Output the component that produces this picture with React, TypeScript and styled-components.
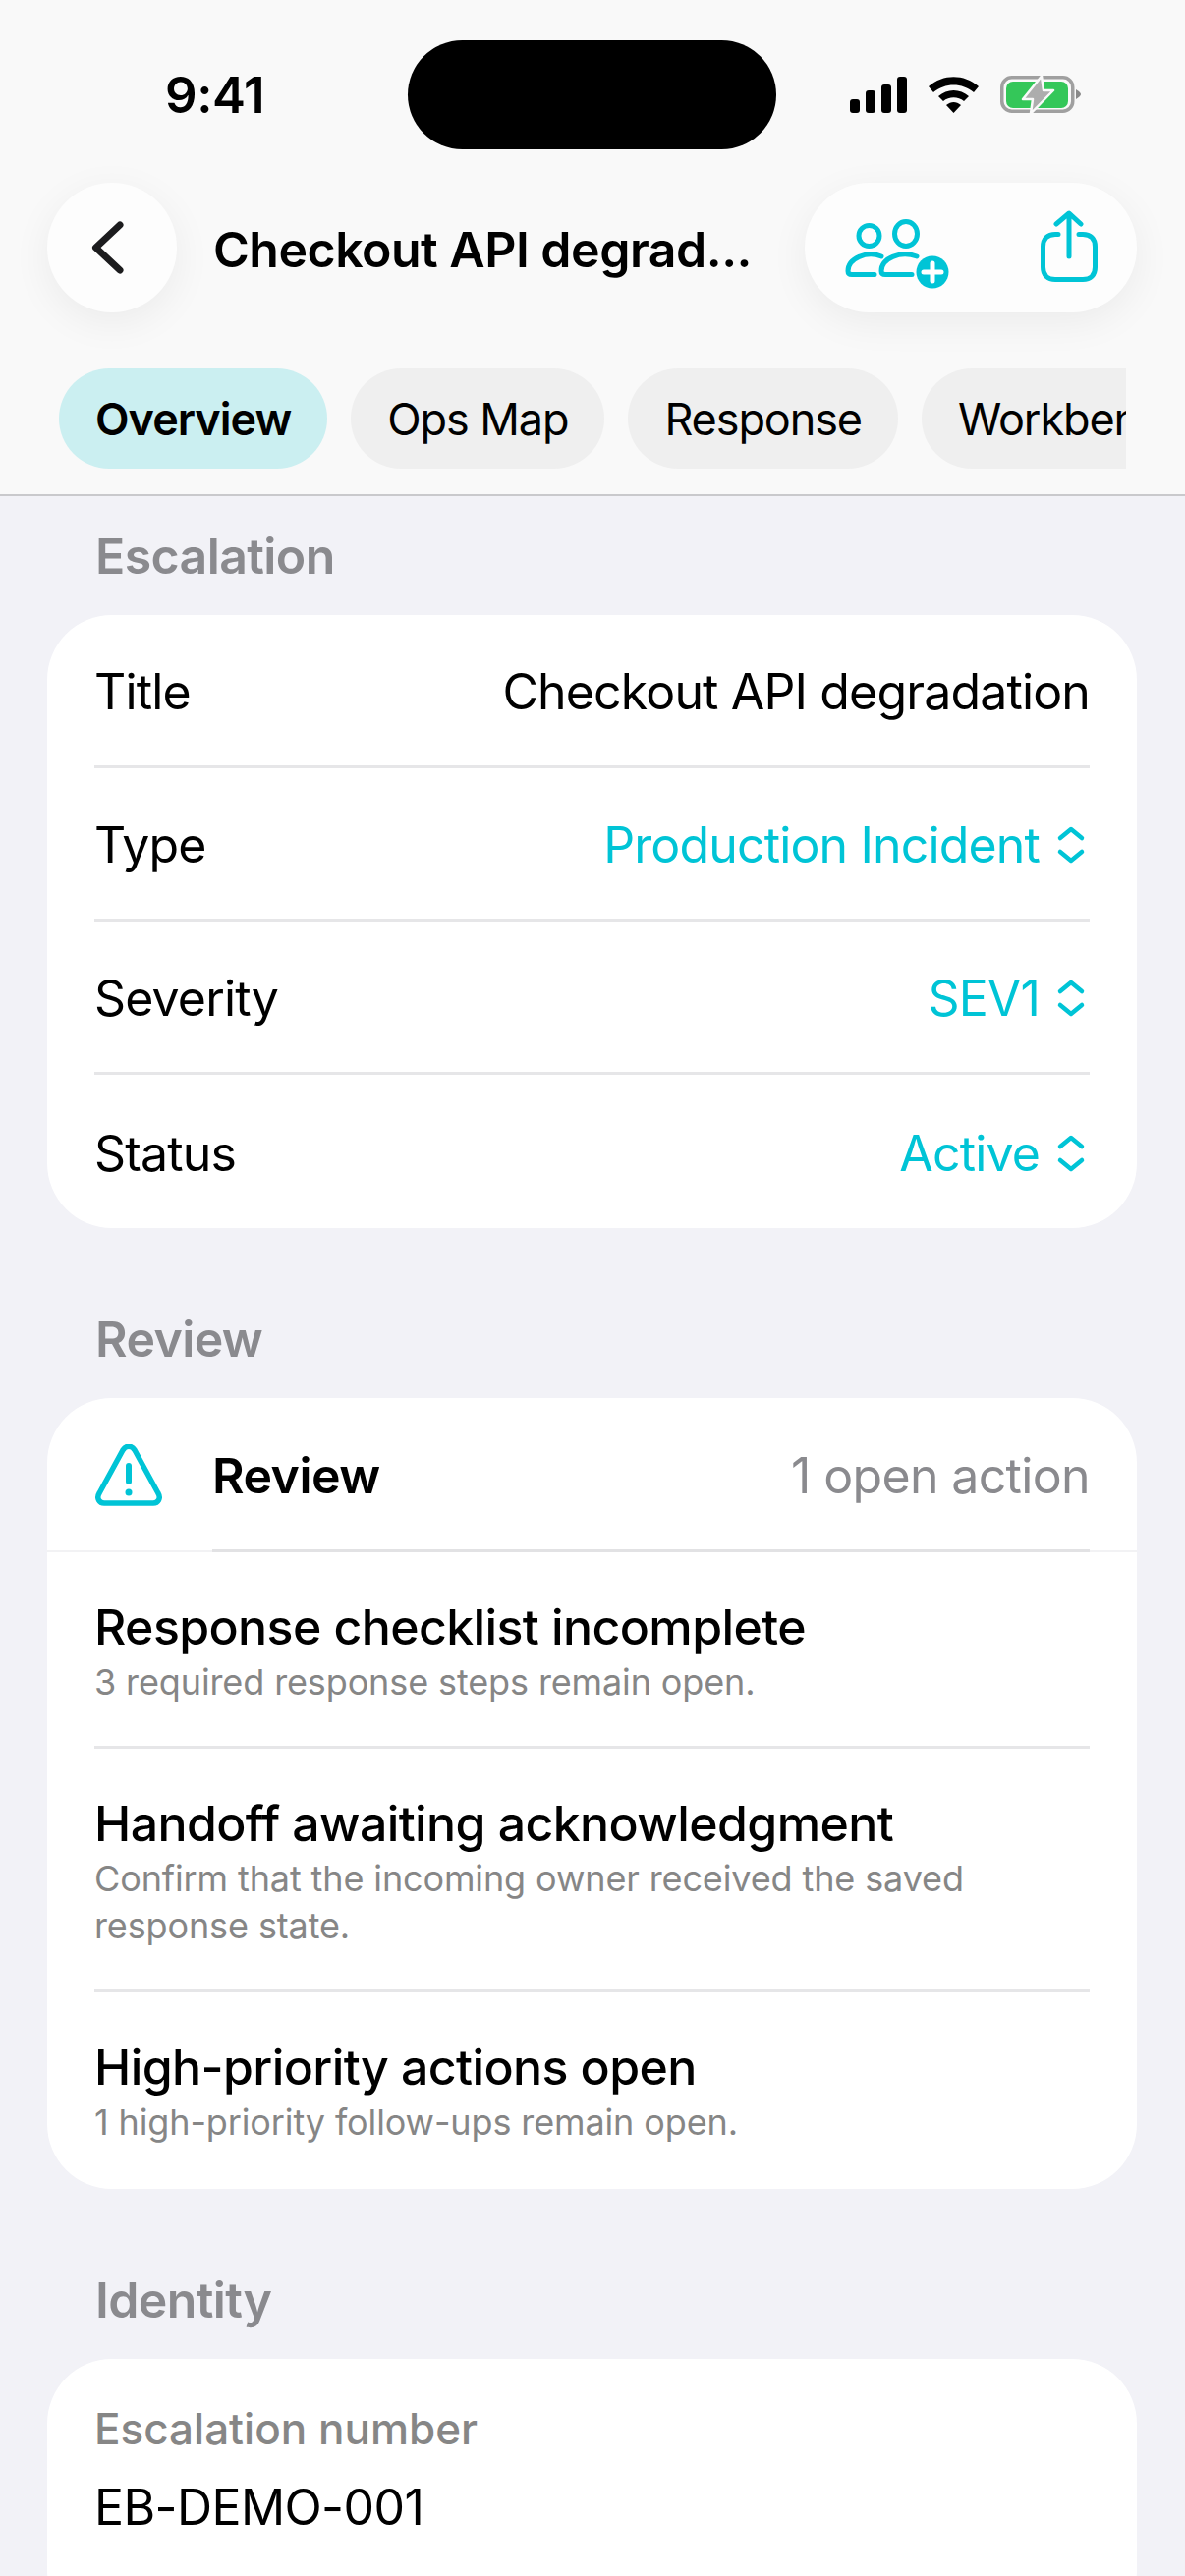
import styled, {createGlobalStyle} from 'styled-components';

const teal = '#00c4d6';

const GlobalStyle = createGlobalStyle`
    html, body {
        margin: 0;
        padding: 0;
        background: #f2f2f7;
    }

    body {
        font-family: Inter, "Liberation Sans", sans-serif;
        color: #000;
    }

    * {
        box-sizing: border-box;
    }
`;

const Page = styled.div`
    width: 1206px;
    height: 2622px;
    overflow: hidden;
    background: #f2f2f7;
`;

const Header = styled.header`
    height: 505px;
    background: #f9f9f9;
    border-bottom: 2px solid #c9c9cc;
`;

const StatusBar = styled.div`
    height: 186px;
    padding: 41px 0 0 168px;
    display: flex;
    align-items: flex-start;
`;

const Time = styled.div`
    width: 247px;
    height: 111px;
    display: flex;
    align-items: center;
    font-size: 51px;
    font-weight: 600;
    letter-spacing: -0.4px;
`;

const Island = styled.div`
    width: 375px;
    height: 111px;
    border-radius: 56px;
    background: #000;
`;

const StatusIcons = styled.div`
    height: 111px;
    display: flex;
    align-items: center;
    gap: 22px;
    margin-left: 75px;
`;

const NavRow = styled.div`
    display: flex;
    align-items: center;
    padding: 0 49px 0 48px;
    height: 132px;
`;

const BackButton = styled.div`
    width: 132px;
    height: 132px;
    border-radius: 50%;
    background: #fdfdfd;
    box-shadow: 0 10px 40px rgba(0, 0, 0, 0.06);
    display: flex;
    align-items: center;
    justify-content: center;
`;

const NavTitle = styled.div`
    flex: 1;
    margin-left: 37px;
    padding-top: 3px;
    font-size: 50px;
    font-weight: 600;
    letter-spacing: -0.5px;
    white-space: nowrap;
`;

const ActionPill = styled.div`
    width: 338px;
    height: 132px;
    border-radius: 66px;
    background: #fdfdfd;
    box-shadow: 0 10px 40px rgba(0, 0, 0, 0.06);
    display: flex;
    align-items: center;
    justify-content: space-between;
    padding: 0 40px 0 41px;
`;

const TabScroller = styled.div`
    display: flex;
    gap: 24px;
    width: 1086px;
    margin: 57px 0 0 60px;
    overflow: hidden;
`;

const Tab = styled.div<{$active?: boolean}>`
    flex: none;
    height: 102px;
    padding: 0 37px;
    border-radius: 51px;
    display: flex;
    align-items: center;
    font-size: 45px;
    letter-spacing: ${({$active}) => ($active ? '-1px' : '-1.1px')};
    font-weight: ${({$active}) => ($active ? 600 : 400)};
    background: ${({$active}) => ($active ? '#cbeff1' : '#efefef')};
`;

const Content = styled.main`
    padding: 0 49px 0 48px;
`;

const SectionLabel = styled.div`
    height: 173px;
    padding: 83px 49px 0;
    font-size: 50px;
    line-height: 60px;
    font-weight: 600;
    letter-spacing: -0.6px;
    color: #8a8a8e;
`;

const FirstLabel = styled(SectionLabel)`
    height: 121px;
    padding-top: 31px;
`;

const Card = styled.section`
    background: #fff;
    border-radius: 66px;
    overflow: hidden;
`;

const Row = styled.div`
    height: 156px;
    margin: 0 48px;
    padding-top: 3px;
    display: flex;
    align-items: center;
    justify-content: space-between;
    font-size: 50px;
    letter-spacing: -0.85px;
    border-bottom: 3px solid #e6e6e8;

    &:last-child {
        border-bottom: none;
    }
`;

const PickerValue = styled.div`
    display: flex;
    align-items: center;
    gap: 13px;
    color: ${teal};
`;

const ReviewHeader = styled.div`
    height: 157px;
    display: flex;
    align-items: center;
    padding: 2px 48px 0;
    border-bottom: 2px solid #f2f2f4;
    position: relative;
`;

const ReviewTitle = styled.div`
    margin-left: 50px;
    flex: 1;
    font-size: 50px;
    font-weight: 600;
    letter-spacing: -0.5px;
`;

const ReviewCount = styled.div`
    font-size: 50px;
    letter-spacing: -0.65px;
    color: #8a8a8e;
`;

const ReviewRule = styled.div`
    position: absolute;
    left: 168px;
    right: 48px;
    bottom: -2px;
    height: 3px;
    background: #e2e2e4;
`;

const Finding = styled.div`
    margin: 0 48px;
    padding: 46px 0 41px;
    border-bottom: 3px solid #e6e6e8;

    &:last-child {
        border-bottom: none;
        padding-bottom: 44px;
    }
`;

const FindingTitle = styled.div`
    font-size: 50px;
    line-height: 60px;
    font-weight: 500;
    letter-spacing: -0.6px;
`;

const FindingText = styled.div`
    margin-top: 2px;
    font-size: 36px;
    line-height: 48px;
    letter-spacing: -0.12px;
    color: #868686;
`;

const FieldLabel = styled.div`
    padding: 44px 48px 0;
    font-size: 44px;
    line-height: 54px;
    font-weight: 500;
    color: #868686;
`;

const FieldValue = styled.div`
    padding: 23px 48px 100px;
    font-size: 50px;
    line-height: 60px;
    letter-spacing: -0.6px;
`;

const ChevronLeft = () => (
    <svg width="44" height="60" viewBox="0 0 44 60" fill="none">
        <path d="M30 7 L5.5 30 L30 53" stroke="#1c1c1e" strokeWidth="7" strokeLinecap="round" strokeLinejoin="round"/>
    </svg>
);

const SignalIcon = () => (
    <svg width="58" height="37" viewBox="0 0 58 37">
        <rect x="0" y="23" width="10" height="14" rx="3" fill="#000"/>
        <rect x="16" y="14" width="10" height="23" rx="3" fill="#000"/>
        <rect x="32" y="8" width="10" height="29" rx="3" fill="#000"/>
        <rect x="48" y="0" width="10" height="37" rx="3" fill="#000"/>
    </svg>
);

const WifiIcon = () => (
    <svg width="51" height="37" viewBox="0 0 51 37">
        <path d="M0 10 C15 -3 36 -3 51 10 L46 16 C34 6 17 6 5 16 Z" fill="#000"/>
        <path d="M10 20 C19 12 32 12 41 20 L36 25 C30 20 21 20 15 25 Z" fill="#000"/>
        <path d="M18 29 C23 25 28 25 33 29 L25.5 37 Z" fill="#000"/>
    </svg>
);

const BatteryIcon = () => (
    <svg width="82" height="39" viewBox="0 0 82 39">
        <rect x="1.75" y="1.75" width="72" height="34.5" rx="10" fill="none" stroke="#a0a0a0" strokeWidth="3.5"/>
        <rect x="6" y="6" width="63" height="27" rx="7" fill="#34c759"/>
        <path d="M77 14 Q82 17 82 19 Q82 21 77 24 Z" fill="#8a8a8a"/>
        <path d="M42 0.5 L23 24 L33 24 L31 38.5 L54 15 L44 15 Z" fill="#adadad" stroke="#f9f9f9" strokeWidth="2.5" strokeLinejoin="round"/>
    </svg>
);

const PeopleAddIcon = () => (
    <svg width="106" height="84" viewBox="0 -13 106 84" fill="none" stroke={teal} strokeWidth="5">
        <circle cx="24.5" cy="17" r="10.5"/>
        <ellipse cx="62" cy="15" rx="11.5" ry="12.5"/>
        <path d="M37 38 C22 32 3 40 3 53 Q3 56.5 7 56.5 L30 56.5" strokeLinecap="round"/>
        <path d="M73 38 C56 32 37 40 37 53 Q37 56.5 41 56.5 L68 56.5" strokeLinecap="round"/>
        <circle cx="89" cy="54" r="16.5" fill={teal} stroke="none"/>
        <path d="M89 45 V63 M80 54 H98" stroke="#fff" strokeLinecap="round"/>
    </svg>
);

const ShareIcon = () => (
    <svg width="58" height="76" viewBox="0 0 58 76" fill="none" stroke={teal} strokeWidth="5" strokeLinecap="round" strokeLinejoin="round">
        <path d="M18 24.5 H15 C7 24.5 2.5 29 2.5 37 V58 C2.5 66 7 70.5 15 70.5 H43 C51 70.5 55.5 66 55.5 58 V37 C55.5 29 51 24.5 43 24.5 H39"/>
        <path d="M29 47 V4 M16 14 L29 3 L41 14"/>
    </svg>
);

const UpDownIcon = () => (
    <svg width="38" height="44" viewBox="0 0 38 44" fill="none" stroke={teal} strokeWidth="4.5" strokeLinecap="round" strokeLinejoin="round">
        <path d="M8 15 L19 6 L30 15"/>
        <path d="M8 29 L19 38 L30 29"/>
    </svg>
);

const WarningIcon = () => (
    <svg width="70" height="64" viewBox="0 0 70 64" fill="none" stroke={teal} strokeLinecap="round" strokeLinejoin="round">
        <path d="M29 6 C32 1 38 1 41 6 L65 50 C68 55 65 60 60 60 H10 C5 60 2 55 5 50 Z" strokeWidth="5.5"/>
        <path d="M35 22 V38" strokeWidth="6"/>
        <circle cx="35" cy="49" r="3.5" fill={teal} stroke="none"/>
    </svg>
);

const App = () => (
    <Page>
        <GlobalStyle/>
        <Header>
            <StatusBar>
                <Time>9:41</Time>
                <Island/>
                <StatusIcons>
                    <SignalIcon/>
                    <WifiIcon/>
                    <BatteryIcon/>
                </StatusIcons>
            </StatusBar>
            <NavRow>
                <BackButton><ChevronLeft/></BackButton>
                <NavTitle>Checkout API degrad...</NavTitle>
                <ActionPill>
                    <PeopleAddIcon/>
                    <ShareIcon/>
                </ActionPill>
            </NavRow>
            <TabScroller>
                <Tab $active>Overview</Tab>
                <Tab>Ops Map</Tab>
                <Tab>Response</Tab>
                <Tab>Workbench</Tab>
            </TabScroller>
        </Header>
        <Content>
            <FirstLabel>Escalation</FirstLabel>
            <Card>
                <Row><span>Title</span><span>Checkout API degradation</span></Row>
                <Row><span>Type</span><PickerValue>Production Incident<UpDownIcon/></PickerValue></Row>
                <Row><span>Severity</span><PickerValue>SEV1<UpDownIcon/></PickerValue></Row>
                <Row><span>Status</span><PickerValue>Active<UpDownIcon/></PickerValue></Row>
            </Card>
            <SectionLabel>Review</SectionLabel>
            <Card>
                <ReviewHeader>
                    <WarningIcon/>
                    <ReviewTitle>Review</ReviewTitle>
                    <ReviewCount>1 open action</ReviewCount>
                    <ReviewRule/>
                </ReviewHeader>
                <Finding>
                    <FindingTitle>Response checklist incomplete</FindingTitle>
                    <FindingText>3 required response steps remain open.</FindingText>
                </Finding>
                <Finding>
                    <FindingTitle>Handoff awaiting acknowledgment</FindingTitle>
                    <FindingText>Confirm that the incoming owner received the saved response state.</FindingText>
                </Finding>
                <Finding>
                    <FindingTitle>High-priority actions open</FindingTitle>
                    <FindingText>1 high-priority follow-ups remain open.</FindingText>
                </Finding>
            </Card>
            <SectionLabel>Identity</SectionLabel>
            <Card>
                <FieldLabel>Escalation number</FieldLabel>
                <FieldValue>EB-DEMO-001</FieldValue>
            </Card>
        </Content>
    </Page>
);

export default App;
